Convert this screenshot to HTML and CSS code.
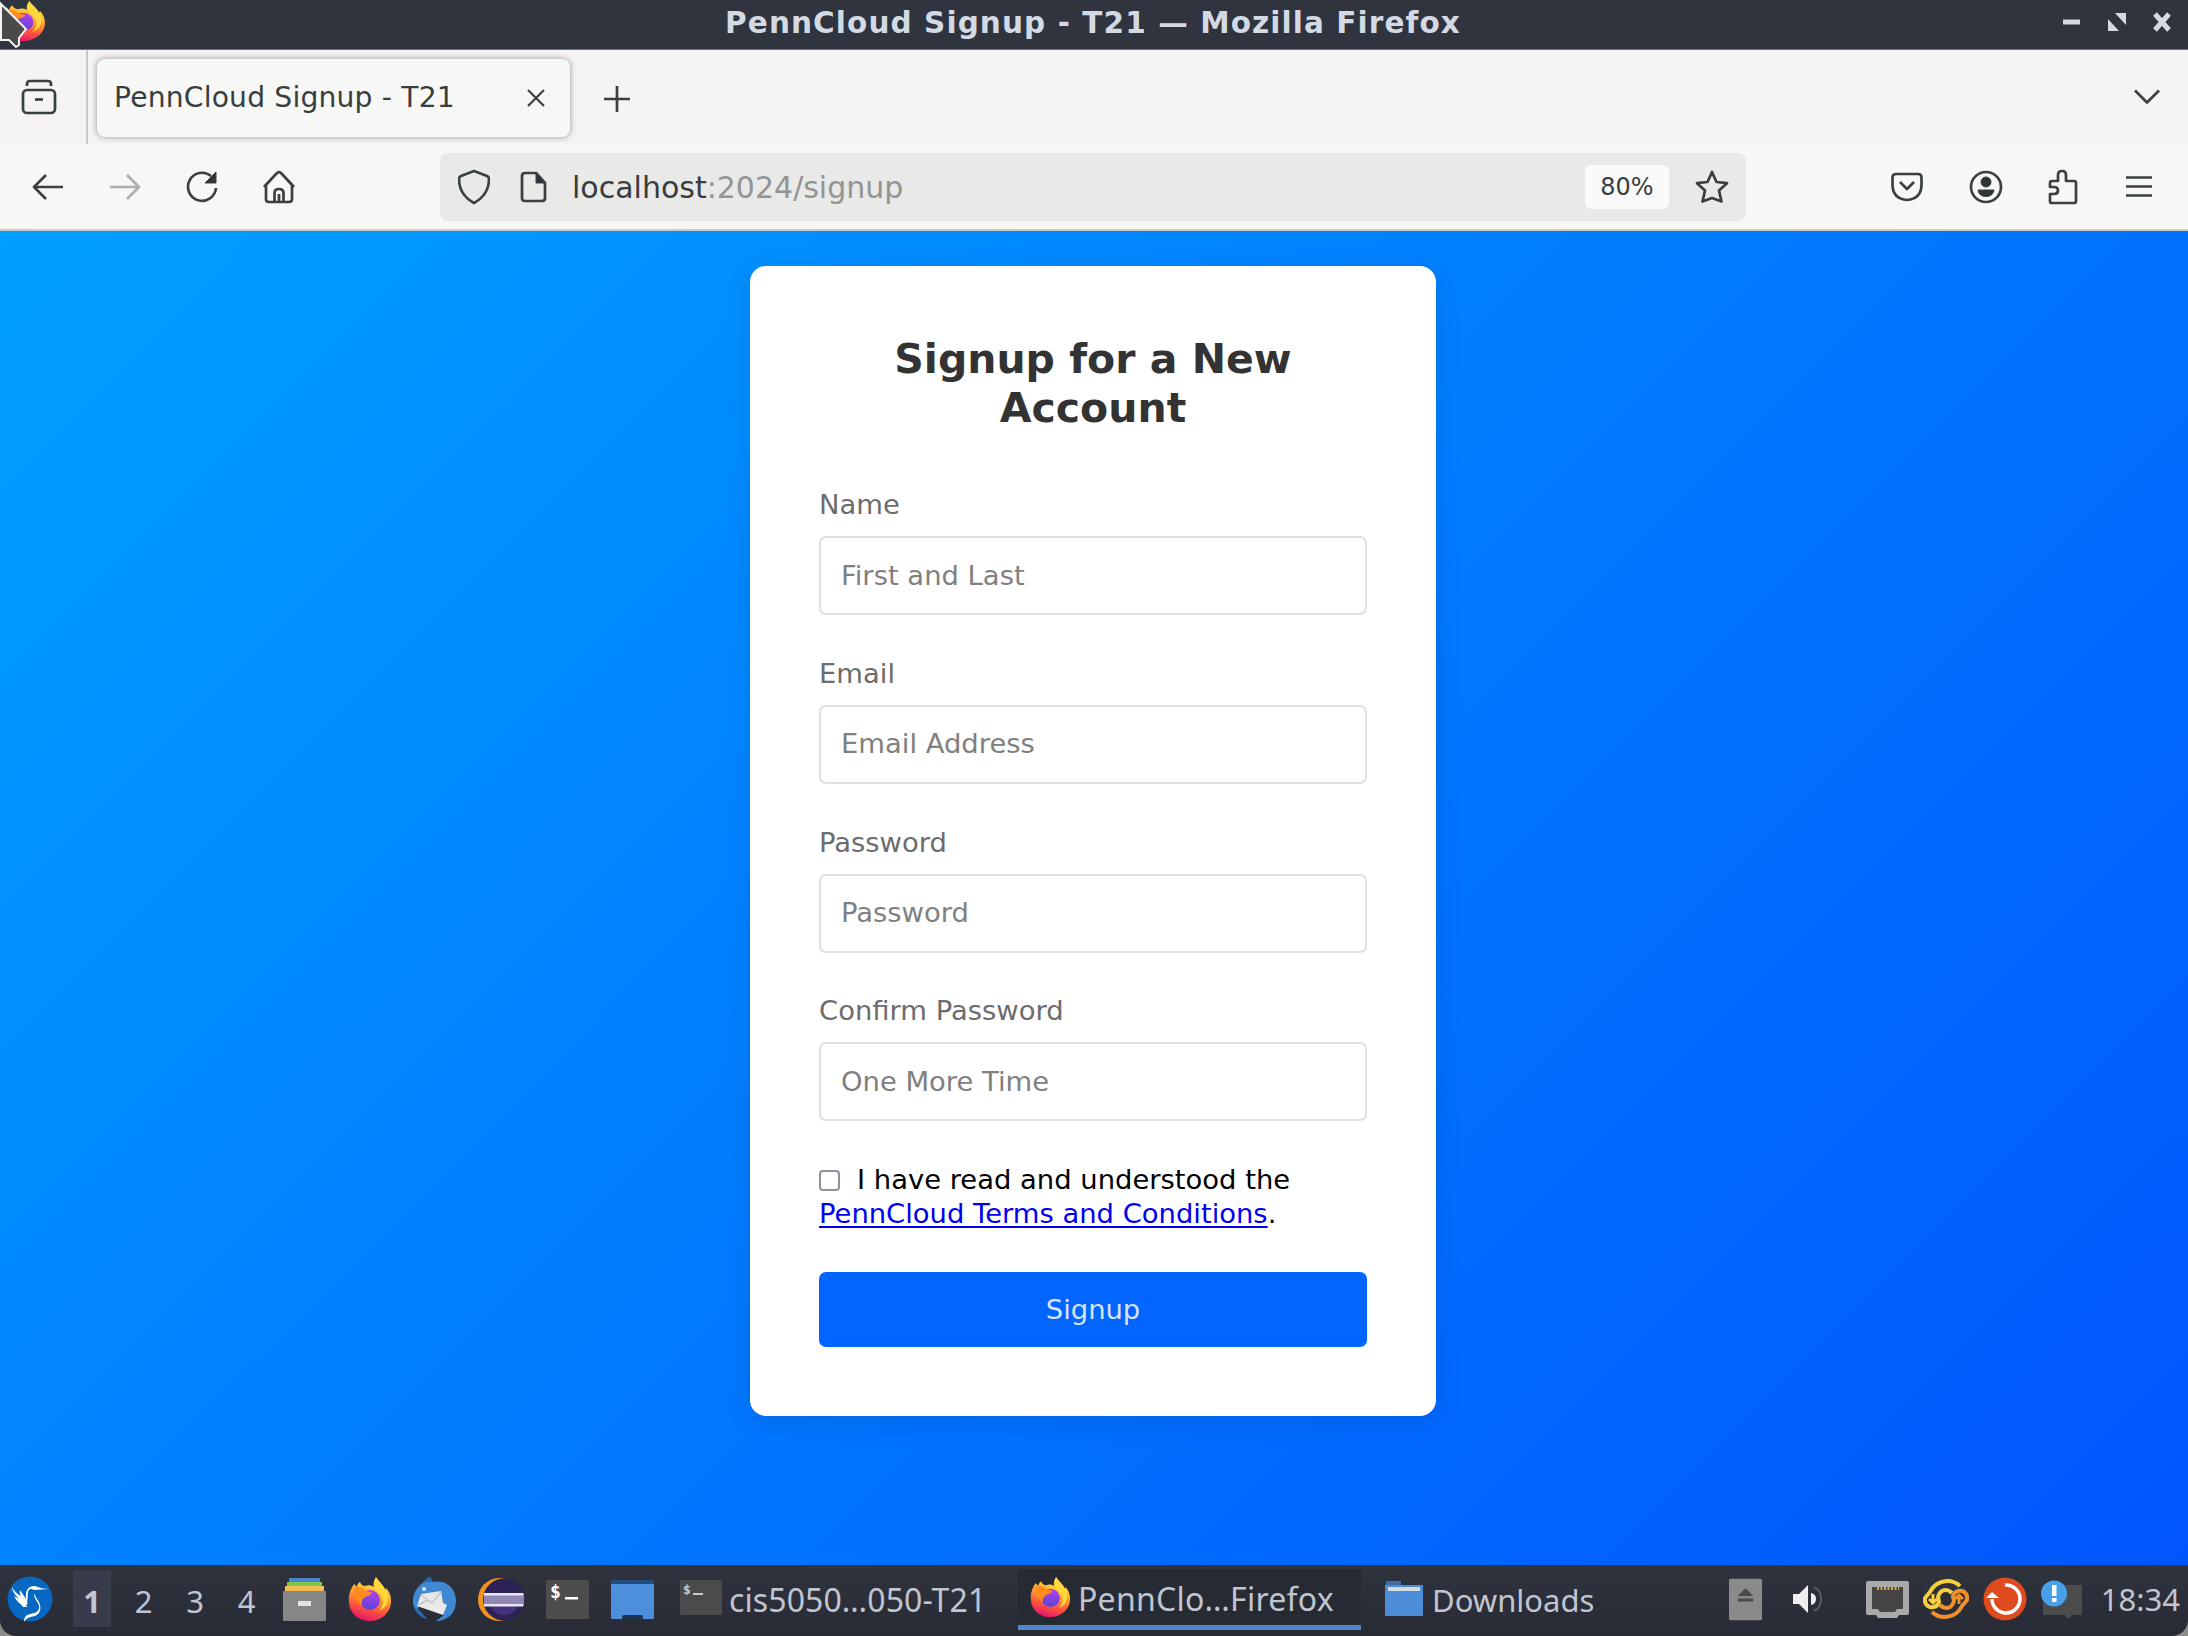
FILE: index.html
```html
<!DOCTYPE html>
<html lang="en">
<head>
<meta charset="utf-8">
<title>PennCloud Signup - T21</title>
<link rel="stylesheet" href="styles.css">
</head>
<body>
<svg class="defs" width="0" height="0" aria-hidden="true">
  <defs>
    <linearGradient id="flame" x1="0.7" y1="0" x2="0.4" y2="1">
      <stop offset="0" stop-color="#fff04a"/><stop offset="0.4" stop-color="#ffb02e"/><stop offset="0.7" stop-color="#ff5a3a"/><stop offset="1" stop-color="#e3156b"/>
    </linearGradient>
    <linearGradient id="globe" x1="0.6" y1="0" x2="0.4" y2="1">
      <stop offset="0" stop-color="#b33ef0"/><stop offset="1" stop-color="#5a45d0"/>
    </linearGradient>
    <symbol id="firefox" viewBox="0 0 44 46">
      <path fill="url(#flame)" d="M28 1c-2 5-3 6-2 10-3-2-6-2-9-1-3 0-4-2-5-4-2 1-3 3-3 5L6 8C3 13 0 18 1 27c1 11 10 18 21 18s21-8 21-20c0-6-2-10-5-13l-1 3C36 9 31 6 28 1z"/>
      <circle cx="22" cy="24" r="10" fill="url(#globe)"/>
      <path fill="#ff8a1e" d="M6 12c4-2 9-1 12 3l6 1c-1 4-5 4-7 5-3 2-4 5-3 8-6-3-10-9-8-17z"/>
      <path fill="#ffd83b" d="M28 1c-5 8 0 13 4 17 5 6 3 13-1 17 8-3 11-12 7-20C36 9 31 7 28 1z"/>
    </symbol>
  </defs>
</svg>
<div class="desktop">
  <header class="titlebar">
    <svg class="title-logo" width="46" height="42" viewBox="0 0 44 46" preserveAspectRatio="none"><use href="#firefox"/></svg>
    <h1 class="window-title">PennCloud Signup - T21 — Mozilla Firefox</h1>
    <div class="window-buttons">
      <svg width="18" height="20" viewBox="0 0 18 20"><path d="M0 7.500h17v5H0z" fill="#d3dae3"/></svg>
      <svg width="18" height="20" viewBox="0 0 18 20"><path d="M7 1h11v12zM0 7v12h11z" fill="#d3dae3"/></svg>
      <svg width="18" height="20" viewBox="0 0 18 20"><path d="M2 2l14 16M16 2L2 18" stroke="#d3dae3" stroke-width="5" fill="none"/></svg>
    </div>
  </header>

  <div class="tabstrip">
    <div class="tab-overview">
      <svg class="ico" width="36" height="36" viewBox="0 0 36 36"><path d="M6 7V5q0-3 3-3h18q3 0 3 3v2"/><rect x="2" y="11" width="32" height="23" rx="4"/><path d="M14 20.500h8"/></svg>
    </div>
    <div class="tab">
      <span>PennCloud Signup - T21</span>
      <svg class="ico thin" width="18" height="18" viewBox="0 0 18 18"><path d="M1 1l16 16M17 1L1 17"/></svg>
    </div>
    <svg class="ico newtab" width="26" height="26" viewBox="0 0 26 26"><path d="M13 0v26M0 13h26"/></svg>
    <svg class="ico listtabs" width="26" height="16" viewBox="0 0 26 16"><path d="M1 1.500l12 12 12-12"/></svg>
  </div>

  <nav class="toolbar">
    <div class="nav-buttons">
      <svg class="ico" width="32" height="32" viewBox="0 0 32 32"><path d="M31 16H2M14 4L2 16l12 12"/></svg>
      <svg class="ico faded" width="32" height="32" viewBox="0 0 32 32"><path d="M1 16h29M18 4l12 12-12 12"/></svg>
      <svg class="ico" width="32" height="32" viewBox="0 0 32 32"><path d="M30 17a14 14 0 1 1-5-12"/><path class="solid" d="M30 1v11H19z"/></svg>
      <svg class="ico" width="32" height="34" viewBox="0 0 32 34"><path d="M1 17L13.500 3.500q2.500-2.500 5 0L31 17M3 15v14q0 3 3 3h20q3 0 3-3V15M11.500 32V23q0-4 4.500-4t4.500 4v9M16 32v-8"/></svg>
    </div>
    <div class="urlbar">
      <svg class="ico" width="32" height="36" viewBox="0 0 32 36"><path d="M16 2L29 7q2 1 2 3 0 16-15 24Q1 26 1 10q0-2 2-3z"/></svg>
      <svg class="ico page-ico" width="27" height="32" viewBox="0 0 27 32"><path d="M5 2h11l9 10v15q0 3-3 3H5q-3 0-3-3V5q0-3 3-3z"/><path class="solid" d="M16 2l9 10h-9z"/></svg>
      <span class="url"><b>localhost</b>:2024/signup</span>
      <span class="zoom">80%</span>
      <svg class="ico" width="34" height="34" viewBox="0 0 34 34"><path d="M17 2l4.500 10 10.500 1.200-8 7.300 2.500 11L17 28l-9.500 3.500 2.500-11-8-7.300L12.500 12z"/></svg>
    </div>
    <div class="tool-buttons">
      <svg class="ico" width="32" height="30" viewBox="0 0 32 30"><path d="M5 2h22q3.500 0 3.500 3.500V13Q30 27 16 28 2 27 1.500 13V5.500Q1.500 2 5 2zM9 10l7 7 7-7"/></svg>
      <svg class="ico" width="34" height="34" viewBox="0 0 34 34"><circle cx="17" cy="17" r="15"/><circle class="solid" cx="17" cy="12" r="5"/><path class="solid" d="M9 20h16q-1 6.500-8 6.500T9 20z"/></svg>
      <svg class="ico" width="32" height="36" viewBox="0 0 32 36"><path d="M4 12h6V6q0-4 4-4t4 4v6h8q2 0 2 2v18q0 2-2 2H4q-2 0-2-2v-7h4q4 0 4-3.500T6 18H2v-4q0-2 2-2z"/></svg>
      <svg class="ico" width="26" height="24" viewBox="0 0 26 24"><path d="M0 2.500h26M0 11.500h26M0 20.500h26"/></svg>
    </div>
  </nav>

  <main class="page">
    <form class="card">
      <h2>Signup for a New Account</h2>
      <div class="field"><label for="name">Name</label><input id="name" type="text" placeholder="First and Last"></div>
      <div class="field"><label for="email">Email</label><input id="email" type="text" placeholder="Email Address"></div>
      <div class="field"><label for="pw">Password</label><input id="pw" type="password" placeholder="Password"></div>
      <div class="field"><label for="pw2">Confirm Password</label><input id="pw2" type="password" placeholder="One More Time"></div>
      <p class="terms"><input class="check" type="checkbox" aria-label="Accept terms">I have read and understood the <a href="#">PennCloud Terms and Conditions</a>.</p>
      <button class="submit" type="button">Signup</button>
    </form>
  </main>

  <footer class="panel">
    <svg class="start" width="46" height="46" viewBox="0 0 46 46"><circle cx="23" cy="23" r="22.500" fill="#0768c4"/><path fill="#fff" d="M5 11q3 6 9 9-2-3-1-6l6 9c-1-8 2-13 8-13 4 0 5 3 15 3l-15 1c-3-2-6-1-6 3l-1 12-3 1c-5-2-8-6-10-10l5 3C8 19 5 15 5 11zM12 26l9 5-5 0zM28 19l-1-1c0 6 6 9 5 14-1 5-5 5-9 6-4 1-6 3-6 8 3-5 7-5 11-6 5-2 6-7 5-11-1-5-4-6-5-10z"/></svg>
    <div class="desks"><span class="active">1</span><span>2</span><span>3</span><span>4</span></div>
    <div class="launchers">
      <svg width="43" height="44" viewBox="0 0 43 44"><path fill="#4a86d0" d="M6 1h31v5H6z"/><path fill="#7ac84e" d="M4 5h35v5H4z"/><path fill="#f5bc52" d="M2 9h39v5H2z"/><rect y="14" width="43" height="30" rx="1" fill="#868686"/><rect x="15" y="24" width="13" height="5" fill="#e4e4e4"/></svg>
      <svg width="44" height="46" viewBox="0 0 44 46"><use href="#firefox"/></svg>
      <svg width="43" height="44" viewBox="0 0 43 44"><path fill="#3f88d2" d="M11 5q2-4 6-5l3 5C34 2 43 12 43 24c0 13-9 20-20 20l8-6L7 27l-2 5 9 10C5 39 0 32 0 24 0 15 5 9 11 5z"/><path fill="#2468b0" d="M11 5q2-4 6-5l3 5zM1 30l4 2 9 10C7 40 2 35 1 30z"/><path fill="#e9e9e9" d="M8 17l20-3 2 12 4 2-4 10L4 29z"/><path fill="none" stroke="#c4c4c4" stroke-width="1.500" d="M8 18l11 8 9-11M5 28l10-5"/><circle cx="11" cy="12" r="2" fill="#d5e8ff"/></svg>
      <svg width="47" height="43" viewBox="0 0 47 43"><ellipse cx="21" cy="21.500" rx="21" ry="21.500" fill="#f5921e"/><circle cx="26" cy="21.500" r="21" fill="#2c2255"/><path fill="#473280" d="M12 28h28q-5 9-14 9t-14-9z"/><path fill="#9286b4" d="M6 15h40v13H6z"/><path fill="#e8e6f0" d="M6 15h39v2.500H6zM6 26h39v2.500H6z"/></svg>
      <svg width="43" height="39" viewBox="0 0 43 39"><rect width="43" height="39" rx="1" fill="#4d4d4d"/><text class="prompt" x="4" y="18">$</text><path fill="#fff" d="M19 17h13v2.500H19z"/></svg>
      <svg width="43" height="39" viewBox="0 0 43 39"><path fill="#234d7d" d="M0 0h43v5H0z"/><path fill="#4d8fdb" d="M0 4h43v34q0 1-1 1H1q-1 0-1-1z"/><path fill="#1c3454" d="M11 39v-2q0-2 2-2h17q2 0 2 2v2z"/></svg>
    </div>
    <div class="tasks">
      <div class="task terminal"><svg width="42" height="35" viewBox="0 0 42 35"><rect width="42" height="35" rx="2" fill="#4b4b4b"/><text class="prompt small" x="3" y="14">$</text><path fill="#ccc" d="M13 13h10v2H13z"/></svg><span>cis5050…050-T21</span></div>
      <div class="task current"><svg width="41" height="42" viewBox="0 0 44 46" preserveAspectRatio="none"><use href="#firefox"/></svg><span>PennClo…Firefox</span></div>
      <div class="task files"><svg width="38" height="35" viewBox="0 0 38 35"><path fill="#3e6ea6" d="M1 0h15v8H1z"/><path fill="#4d8dd8" d="M0 4h38v30q0 1-1 1H1q-1 0-1-1z"/><path fill="#d7dbe4" d="M3 6h32v4H3z"/></svg><span>Downloads</span></div>
    </div>
    <div class="tray">
      <svg width="33" height="43" viewBox="0 0 34 43"><rect width="34" height="43" rx="2" fill="#8a8a8a"/><path fill="#4a4a4a" d="M17 10l8 8H9zM9 20.500h16v3H9z"/></svg>
      <svg class="volume" width="30" height="28" viewBox="0 0 30 28"><path fill="#efefef" d="M0 9h6l9-9v28l-9-9H0zM18 8q5 1 5 6t-5 6z"/><path fill="none" stroke="#555a66" stroke-width="2" d="M21 2q7 3 7 12t-7 12"/></svg>
      <svg class="network" width="43" height="37" viewBox="0 0 43 37"><path fill="#a9a9a9" d="M2 0h39q2 0 2 2v30q0 2-2 2h-8l-2 3H12l-2-3H2q-2 0-2-2V2q0-2 2-2z"/><path fill="#454545" d="M6 6h31v22h-6l-2 3H14l-2-3H6z"/><path stroke="#d8a840" stroke-width="3" stroke-dasharray="2 1.500" d="M11 7.500h22"/></svg>
      <svg width="46" height="44" viewBox="0 0 46 44"><g fill="none" stroke-width="4" stroke-linejoin="round"><g stroke="#f5d03a"><path d="M37 9A19 19 0 0 0 7 15L2 21q-1 7 5 9 7 1 9-5l-1-5q2-7 8-7 3 0 6 3"/><path stroke-width="3" d="M10 17v9M6 22l4 4 4-4"/></g><g stroke="#f0902c" transform="rotate(180 23 22)"><path d="M37 9A19 19 0 0 0 7 15L2 21q-1 7 5 9 7 1 9-5l-1-5q2-7 8-7 3 0 6 3"/><path stroke-width="3" d="M10 17v9M6 22l4 4 4-4"/></g></g></svg>
      <svg width="44" height="44" viewBox="0 0 44 44"><circle cx="22" cy="22" r="21.500" fill="#de4b1f"/><path fill="none" stroke="#fff" stroke-width="3.500" d="M22 8a14 14 0 1 1-13 14"/><path fill="#fff" d="M3 21l6-6 7 6z"/></svg>
      <svg width="41" height="39" viewBox="0 0 41 39"><path fill="#4c4c4c" d="M2 5h38q1 0 1 1v29h-10l-3.500 4-3.500-4H2z"/><circle cx="13" cy="13.500" r="13" fill="#48a0ea"/><path fill="#fff" d="M11 5h4.500v11H11zM11 18h4.500v4H11z"/></svg>
    </div>
    <time class="clock">18:34</time>
  </footer>
</div>
<svg class="cursor" width="28" height="49" viewBox="0 0 28 49"><path fill="#4a4a4a" stroke="#f4f4f4" stroke-width="2" d="M1 4l25 25-7 9v7l-3 2-7-7H1z"/></svg>
</body>
</html>
```
FILE: styles.css
```css
* { box-sizing: border-box; }
body {
  margin: 0;
  background: #8c8c88;
  font-family: "DejaVu Sans", sans-serif;
  overflow: hidden;
}
svg { flex: none; display: block; }
.defs { position: absolute; }
.desktop {
  width: 2188px;
  height: 1636px;
  display: grid;
  grid-template-rows: 50px 94px 87px 1334px 71px;
}

.titlebar {
  display: grid;
  grid-template-columns: 120px 1fr 120px;
  align-items: center;
  background: #2f343f;
  border-bottom: 1px solid #6d7078;
}
.title-logo { margin-bottom: 7px; }
.window-title {
  margin: 0 2px 4px 0;
  text-align: center;
  font-size: 29.5px;
  line-height: 40px;
  letter-spacing: 1.1px;
  color: #d3dae3;
  white-space: nowrap;
}
.window-buttons {
  display: flex;
  justify-content: flex-end;
  gap: 27px;
  padding: 0 17px 5px 0;
}

.ico { fill: none; stroke: #3a4042; stroke-width: 2.7; stroke-linejoin: round; }
.ico .solid { fill: #2e3436; stroke-width: 1; }
.ico.thin { stroke-width: 2.2; }
.ico.faded { opacity: .38; }

.tabstrip {
  display: flex;
  align-items: center;
  background: #f5f4f2;
}
.tab-overview {
  width: 88px;
  height: 94px;
  padding: 29px 0 0 21px;
  border-right: 2px solid #c9c9c7;
}
.tab {
  display: flex;
  align-items: center;
  justify-content: space-between;
  width: 473px;
  height: 78px;
  margin: 1px 0 0 9px;
  padding: 0 25px 0 17px;
  border-radius: 8px;
  background: #f7f7f5;
  box-shadow: 0 0 6px rgba(0, 0, 0, .4);
  font-size: 28.2px;
  letter-spacing: .18px;
  color: #383e40;
}
.newtab { margin: 3px 0 0 34px; }
.listtabs { margin-left: auto; margin-right: 28px; }

.toolbar {
  display: flex;
  align-items: center;
  padding-top: 1px;
  background: #f7f7f5;
  border-bottom: 2px solid #cfcac4;
}
.nav-buttons { display: flex; align-items: center; gap: 45px; width: 440px; padding-left: 32px; }
.urlbar {
  display: flex;
  align-items: center;
  width: 1306px;
  height: 68px;
  padding: 0 17px 0 18px;
  border-radius: 8px;
  background: #e9e9e7;
}
.page-ico { margin-left: 30px; }
.url { margin-left: 25px; font-size: 30px; color: #929595; }
.url b { font-weight: 400; color: #383e40; }
.zoom {
  margin: 0 26px 0 auto;
  width: 84px;
  height: 44px;
  border-radius: 6px;
  background: #fafafa;
  text-align: center;
  font-size: 24px;
  line-height: 44px;
  color: #3a4042;
}
.tool-buttons {
  flex: 1;
  display: flex;
  align-items: center;
  justify-content: space-between;
  padding: 0 36px 0 145px;
}

.page {
  display: flex;
  justify-content: center;
  align-items: flex-start;
  padding: 35px 2px 0 0;
  background: linear-gradient(135deg, #00a0ff, #0055ff);
}
.card {
  width: 686px;
  height: 1150px;
  padding: 69px 69px 0;
  border-radius: 16px;
  background: #fff;
  box-shadow: 0 6px 28px rgba(0, 0, 0, .1);
}
.card h2 {
  margin: 0 0 48px;
  text-align: center;
  font-size: 41px;
  line-height: 49px;
  color: #333;
}
.field { height: 168.750px; }
.field label {
  display: block;
  height: 55px;
  font-size: 27.4px;
  line-height: 47px;
  color: #6c6c6c;
}
.field input {
  display: block;
  width: 100%;
  height: 79px;
  padding: 0 20px 1px;
  border: 2px solid #e0e0e0;
  border-radius: 7px;
  font: 27.4px "DejaVu Sans", sans-serif;
  outline: none;
}
.field input::placeholder { color: #808080; opacity: 1; }
.terms { margin: 7px 0 0; font-size: 27.4px; line-height: 34px; color: #000; }
.check {
  appearance: none;
  width: 21px;
  height: 21px;
  margin: 0 17px -2px 0;
  border: 2px solid #8f8f9d;
  border-radius: 4px;
  background: #fff;
}
.terms a { color: #0000ee; text-underline-offset: 3px; text-decoration-thickness: 2px; }
.submit {
  display: block;
  width: 100%;
  height: 75px;
  margin-top: 41px;
  padding: 0;
  border: 0;
  border-radius: 7px;
  background: #0066ff;
  color: #d9e2f0;
  font: 27.4px "DejaVu Sans", sans-serif;
}

.panel {
  display: flex;
  align-items: center;
  padding: 0 8px 3px 7px;
  border-radius: 0 0 16px 16px;
  background: linear-gradient(#2f333d, #282b35);
  color: #c0c5d0;
  font-family: "Noto Sans", sans-serif;
}
.desks { display: flex; margin-left: 20px; font-size: 31px; line-height: 56px; }
.desks span { width: 38px; margin-right: 13.500px; padding-top: 2px; height: 56px; text-align: center; }
.desks .active { background: #383c4a; font-weight: 700; }
.launchers { display: flex; align-items: center; justify-content: space-between; width: 371px; margin: 0 1px 0 4px; }
.prompt { font: 700 18px "DejaVu Sans Mono", monospace; fill: #fff; }
.prompt.small { font-size: 13px; fill: #ccc; }
.tasks { display: flex; height: 61px; margin-left: 17px; }
.task {
  display: flex;
  align-items: center;
  gap: 7px;
  width: 343px;
  padding-left: 12px;
  font-size: 32px;
  white-space: nowrap;
  border-bottom: 5px solid transparent;
}
.task svg { margin-top: 2px; }
.task span { padding-top: 6px; }
.task.terminal { padding-left: 8px; width: 346px; letter-spacing: .1px; }
.task.current { background: #262a32; border-bottom-color: #4d86cc; }
.task.current svg { margin-top: 0; }
.task.current span { letter-spacing: .25px; padding-top: 3px; }
.task.files { padding-left: 24px; gap: 9px; font-size: 31px; }
.task.files svg { margin-top: 4px; }
.tray { display: flex; align-items: center; gap: 14px; margin-left: auto; }
.volume { margin: 0 29px 0 17px; }
.clock { margin-left: 19px; font-size: 31px; }

.cursor { position: absolute; left: 0; top: 0; }
```
